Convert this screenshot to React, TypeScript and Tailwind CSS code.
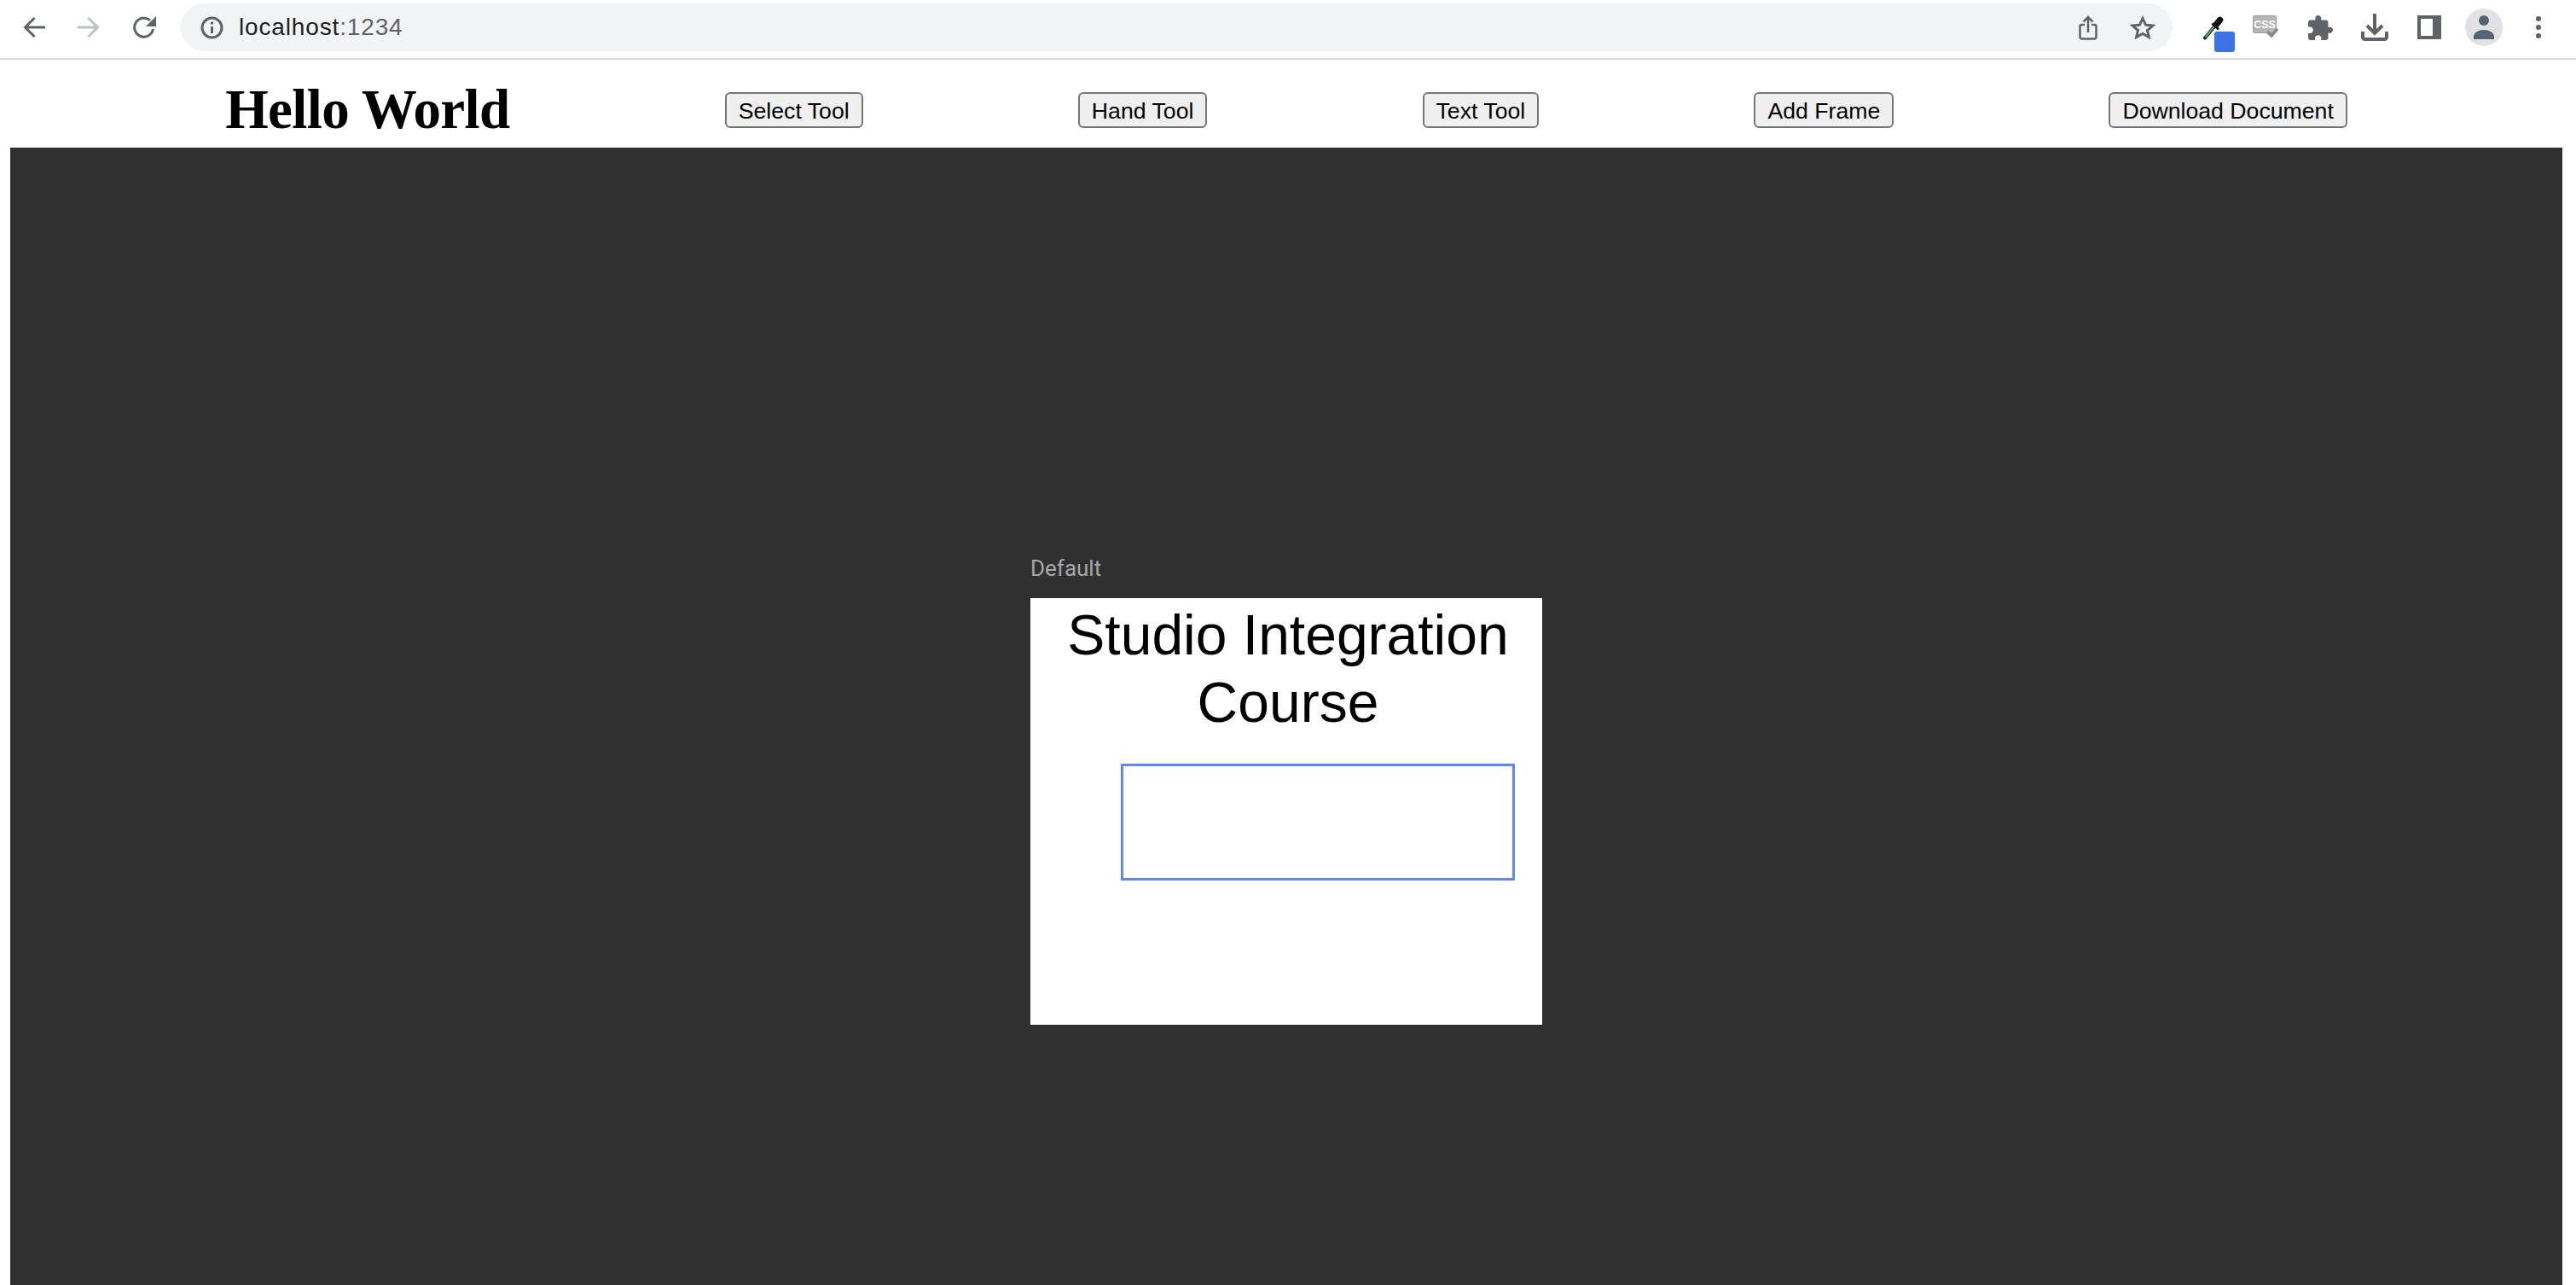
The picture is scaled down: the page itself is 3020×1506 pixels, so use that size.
const tools = ['Select Tool', 'Hand Tool', 'Text Tool', 'Add Frame', 'Download Document']

function ChromeBar() {
  return (
    <div className="h-[70px] flex items-center pb-[4px] pr-[41px] border-b-2 border-[#dadce0] bg-white">
      {/* back */}
      <svg className="ml-[27px] w-[26px] h-[26px]" viewBox="0 0 26 26" fill="none" stroke="#5f6368" strokeWidth="3">
        <path d="M26 13H3M13.5 2 2.5 13l11 11" />
      </svg>
      {/* forward */}
      <svg className="ml-[38px] w-[26px] h-[26px]" viewBox="0 0 26 26" fill="none" stroke="#bdc1c6" strokeWidth="3">
        <path d="M0 13h23M12.5 2l11 11-11 11" />
      </svg>
      {/* reload */}
      <svg className="ml-[38px] w-[28px] h-[26px]" viewBox="0 0 28 26" fill="none">
        <path d="M21 5A11 11 0 1 0 24.5 15" stroke="#5f6368" strokeWidth="3" />
        <path d="M28 0v12H16z" fill="#5f6368" />
      </svg>

      <div className="ml-[29px] flex-1 h-[56px] flex items-center rounded-full bg-[#f1f3f4] pl-[23px] pr-[20px]">
        <svg className="w-[27px] h-[27px]" viewBox="0 0 27 27" fill="none">
          <circle cx="13.5" cy="13.5" r="11.5" stroke="#5f6368" strokeWidth="3" />
          <path d="M13.5 12v8" stroke="#5f6368" strokeWidth="3" />
          <circle cx="13.5" cy="8" r="1.8" fill="#5f6368" />
        </svg>
        <span className="ml-[18px] text-[28px] tracking-[0.85px] leading-none text-[#202124] font-['Liberation_Sans',sans-serif]">
          localhost<span className="text-[#5f6368]">:1234</span>
        </span>
        <svg className="ml-auto w-[22px] h-[29px]" viewBox="0 0 22 29" fill="none" stroke="#5f6368" strokeWidth="2.5">
          <path d="M7 11H3.500a2 2 0 0 0-2 2v12a2.500 2.500 0 0 0 2.500 2.500h14a2.500 2.500 0 0 0 2.500-2.500V13a2 2 0 0 0-2-2H15" />
          <path d="M11 20V2M5.500 7.500 11 2l5.500 5.500" />
        </svg>
        <svg className="ml-[38px] w-[30px] h-[28px]" viewBox="0 0 30 28" fill="none" stroke="#5f6368" strokeWidth="3">
          <path d="M15 3.500 18.500 11.200l8.300.8-6.300 5.500 1.900 8.100L15 21.400 7.600 25.600l1.900-8.100L3.200 12l8.300-.8z" />
        </svg>
      </div>

      {/* color picker extension */}
      <div className="relative ml-[35px] w-[38px] h-[29px]">
        <svg className="w-[25px] h-[29px]" viewBox="0 0 25 29" fill="none">
          <path d="M3 26.500 15 12" stroke="#222" strokeWidth="4" strokeLinecap="round" />
          <path d="M3.500 25.500 14.500 12.500" stroke="#5fa56c" strokeWidth="2" />
          <path d="M11.500 9.500l7.500 7" stroke="#111" strokeWidth="3" />
          <path d="M16.500 10.500 20.500 5.500" stroke="#111" strokeWidth="7.500" strokeLinecap="round" />
        </svg>
        <div className="absolute left-[14px] top-[19px] w-[24px] h-[24px] rounded-[3px] bg-[#3a72e4]" />
      </div>

      {/* css extension */}
      <svg className="ml-[21px] w-[30px] h-[27px] -mt-[2px]" viewBox="0 0 30 27" fill="none">
        <rect x="0.500" y="0.500" width="27" height="20" rx="2" fill="#b5b5b5" stroke="#9c9c9c" />
        <text x="14" y="15" textAnchor="middle" fontFamily="Liberation Sans" fontWeight="700" fontSize="12.500" fill="#fff">CSS</text>
        <path d="M17 19l5 5 7-8" stroke="#8a8a8a" strokeWidth="3.500" />
      </svg>

      {/* puzzle */}
      <svg className="ml-[35px] w-[29px] h-[29px]" viewBox="2 1 21 21" fill="#5f6368">
        <path d="M20.500 11H19V7c0-1.100-.9-2-2-2h-4V3.500C13 2.120 11.880 1 10.500 1S8 2.120 8 3.500V5H4c-1.100 0-1.990.9-1.990 2v3.800H3.500c1.490 0 2.700 1.210 2.700 2.700s-1.210 2.700-2.700 2.700H2V20c0 1.100.9 2 2 2h3.800v-1.500c0-1.490 1.210-2.700 2.700-2.700 1.490 0 2.700 1.210 2.700 2.700V22H17c1.100 0 2-.9 2-2v-4h1.500c1.380 0 2.500-1.120 2.500-2.500S21.880 11 20.500 11z" />
      </svg>

      {/* download */}
      <svg className="ml-[33px] w-[32px] h-[32px]" viewBox="0 0 32 32" fill="none" stroke="#5f6368" strokeWidth="4">
        <path d="M16 0v23M7 14l9 9 9-9" />
        <path d="M2 21v6.500a2.500 2.500 0 0 0 2.500 2.500h23a2.500 2.500 0 0 0 2.500-2.500V21" />
      </svg>

      {/* side panel */}
      <svg className="ml-[34px] w-[28px] h-[28px]" viewBox="0 0 28 28">
        <rect width="28" height="28" fill="#5f6368" />
        <rect x="4" y="4" width="14" height="20" fill="#fff" />
      </svg>

      {/* profile */}
      <div className="ml-[28px] w-[44px] h-[44px] rounded-full bg-[#dfe1e5] flex items-center justify-center">
        <svg className="w-[24px] h-[28px]" viewBox="0 0 24 28" fill="#5a6175">
          <circle cx="12" cy="6" r="6" />
          <path d="M0 28v-3c0-5 6-8 12-8s12 3 12 8v3z" />
        </svg>
      </div>

      {/* menu */}
      <svg className="ml-[39px] w-[6px] h-[26px]" viewBox="0 0 6 26" fill="#5f6368">
        <circle cx="3" cy="3" r="3" />
        <circle cx="3" cy="13" r="3" />
        <circle cx="3" cy="23" r="3" />
      </svg>
    </div>
  )
}

export default function App() {
  return (
    <div className="h-[1506px] overflow-hidden flex flex-col bg-white">
      <ChromeBar />

      <div className="ml-3 mr-4 h-[103px] pt-[14px] flex items-center justify-evenly">
        <h1 className="text-[65px] tracking-[-0.6px] leading-none font-bold text-black font-['Liberation_Serif',serif]">
          Hello World
        </h1>
        {tools.map((tool) => (
          <button
            key={tool}
            className="h-[42px] px-[14px] border-2 border-[#767676] rounded-[6px] bg-[#efefef] text-[26.67px] text-black font-['Liberation_Sans',sans-serif]"
          >
            {tool}
          </button>
        ))}
      </div>

      <div className="ml-3 mr-4 flex-1 bg-[#303030] pt-[478px] flex flex-col items-center">
        <div className="w-[600px]">
          <div className="h-[30px] mb-[20px] text-[26px] leading-[30px] text-[#a8a8a8] font-['Roboto',sans-serif]">
            Default
          </div>
          <div className="relative h-[500px] pt-[4px] pl-1 bg-white text-center text-[66px] leading-[79px] text-black font-['Liberation_Sans',sans-serif]">
            Studio Integration Course
            <div className="absolute left-[106px] top-[194px] w-[462px] h-[137px] border-[3px] border-[#6086f2]" />
          </div>
        </div>
      </div>
    </div>
  )
}
